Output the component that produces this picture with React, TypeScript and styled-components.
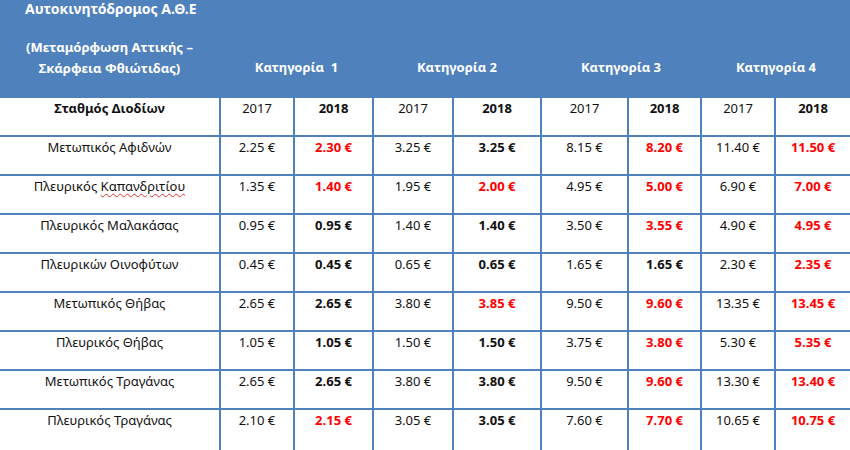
import React from "react";
import styled, { createGlobalStyle } from "styled-components";

const GlobalStyle = createGlobalStyle`
  html, body {
    margin: 0;
    padding: 0;
    background: #ffffff;
  }
  body {
    font-family: "Noto Sans", "Open Sans", sans-serif;
  }
`;

const BLUE = "#4f81bd";

const Table = styled.div`
  width: 850px;
  height: 450px;
  overflow: hidden;
  display: grid;
  grid-template-columns: 219px 72px 77px 78px 86px 85px 71px 72px 74px;
  grid-template-rows: 96px repeat(8, 37px) 40px;
  column-gap: 2px;
  row-gap: 2px;
  background: ${BLUE};
`;

const HeadCell = styled.div<{ $span?: number }>`
  grid-column: span ${(p) => p.$span || 1};
  background: ${BLUE};
  color: #ffffff;
  font-weight: 700;
  font-size: 13px;
  display: flex;
  flex-direction: column;
`;

const Title = styled.div`
  padding-left: 25px;
  font-size: 14px;
  line-height: 17px;
`;

const Subtitle = styled.div`
  margin-top: 20px;
  text-align: center;
  line-height: 21px;
`;

const Category = styled.div`
  margin-top: 58px;
  text-align: center;
  line-height: 18px;
  white-space: pre;
`;

const Cell = styled.div<{ $bold?: boolean; $red?: boolean }>`
  background: #ffffff;
  text-align: center;
  font-size: 13px;
  line-height: 18px;
  padding-top: 1px;
  color: ${(p) => (p.$red ? "#ff0000" : "#111111")};
  font-weight: ${(p) => (p.$bold ? 700 : 400)};
  white-space: nowrap;
`;

const Spelling = styled.span`
  text-decoration: underline wavy #e03030;
  text-decoration-thickness: 1px;
  text-underline-offset: 2px;
`;

type Row = { name: React.ReactNode; prices: [number, number][] };

const rows: Row[] = [
  { name: "Μετωπικός Αφιδνών", prices: [[2.25, 2.3], [3.25, 3.25], [8.15, 8.2], [11.4, 11.5]] },
  {
    name: (
      <>
        Πλευρικός <Spelling>Καπανδριτίου</Spelling>
      </>
    ),
    prices: [[1.35, 1.4], [1.95, 2.0], [4.95, 5.0], [6.9, 7.0]],
  },
  { name: "Πλευρικός Μαλακάσας", prices: [[0.95, 0.95], [1.4, 1.4], [3.5, 3.55], [4.9, 4.95]] },
  { name: "Πλευρικών Οινοφύτων", prices: [[0.45, 0.45], [0.65, 0.65], [1.65, 1.65], [2.3, 2.35]] },
  { name: "Μετωπικός Θήβας", prices: [[2.65, 2.65], [3.8, 3.85], [9.5, 9.6], [13.35, 13.45]] },
  { name: "Πλευρικός Θήβας", prices: [[1.05, 1.05], [1.5, 1.5], [3.75, 3.8], [5.3, 5.35]] },
  { name: "Μετωπικός Τραγάνας", prices: [[2.65, 2.65], [3.8, 3.8], [9.5, 9.6], [13.3, 13.4]] },
  { name: "Πλευρικός Τραγάνας", prices: [[2.1, 2.15], [3.05, 3.05], [7.6, 7.7], [10.65, 10.75]] },
];

const euro = (v: number) => `${v.toFixed(2)} €`;

export default function App() {
  return (
    <>
      <GlobalStyle />
      <Table>
        <HeadCell>
          <Title>Αυτοκινητόδρομος Α.Θ.Ε</Title>
          <Subtitle>
            (Μεταμόρφωση Αττικής –
            <br />
            Σκάρφεια Φθιώτιδας)
          </Subtitle>
        </HeadCell>
        {["Κατηγορία  1", "Κατηγορία 2", "Κατηγορία 3", "Κατηγορία 4"].map((c) => (
          <HeadCell key={c} $span={2}>
            <Category>{c}</Category>
          </HeadCell>
        ))}

        <Cell $bold>Σταθμός Διοδίων</Cell>
        {[0, 1, 2, 3].map((i) => (
          <React.Fragment key={i}>
            <Cell>2017</Cell>
            <Cell $bold>2018</Cell>
          </React.Fragment>
        ))}

        {rows.map((r, ri) => (
          <React.Fragment key={ri}>
            <Cell>{r.name}</Cell>
            {r.prices.map(([a, b], pi) => (
              <React.Fragment key={pi}>
                <Cell>{euro(a)}</Cell>
                <Cell $bold $red={a !== b}>
                  {euro(b)}
                </Cell>
              </React.Fragment>
            ))}
          </React.Fragment>
        ))}
      </Table>
    </>
  );
}
